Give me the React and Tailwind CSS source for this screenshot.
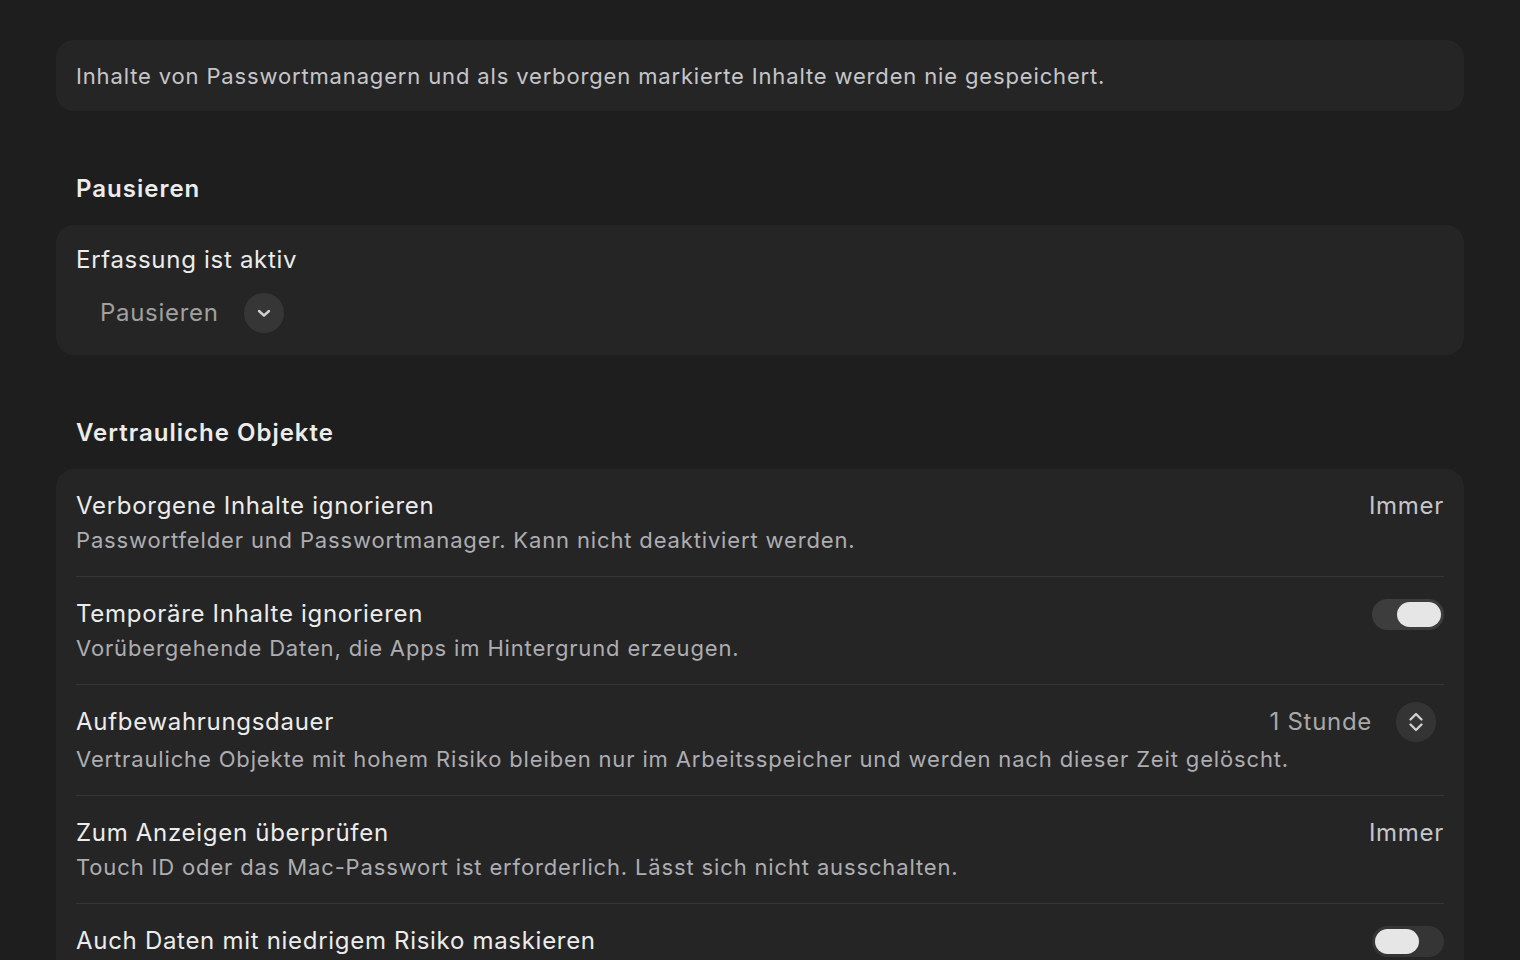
import { useState } from "react"

const font = { fontFamily: "Inter, 'Noto Sans', sans-serif" }

const Toggle = ({ on, onClick }) => (
  <button
    onClick={onClick}
    className={`w-[72px] h-[31px] rounded-full p-[3px] flex ${on ? "justify-end bg-[#3d3d3d]" : "justify-start bg-[#353535]"}`}
  >
    <span className="w-[44px] h-[25px] rounded-full bg-[#e6e6e6]" />
  </button>
)

const Row = ({ title, desc, right, last, tall }) => (
  <div className={last ? "" : "border-b border-[#363636]"}>
    <div className={tall ? "pt-[17px] pb-[21px]" : "pt-[22px] pb-[21px]"}>
      <div className={`flex items-center justify-between ${tall ? "h-[40px]" : "h-[30px]"}`}>
        <span className="text-[24px] leading-[30px] tracking-[0.7px] text-[#ececec]">{title}</span>
        {right}
      </div>
      {desc && (
        <p className={`text-[22px] leading-[30px] tracking-[0.85px] text-[#adadb2] ${tall ? "mt-[2px]" : "mt-[4px]"}`}>{desc}</p>
      )}
    </div>
  </div>
)

const App = () => {
  const [temp, setTemp] = useState(true)
  const [low, setLow] = useState(false)

  return (
    <div className="min-h-screen bg-[#1e1e1e] px-[56px] pt-[40px] pb-10" style={font}>
      <div className="bg-[#252525] rounded-[18px] h-[71px] px-[20px] pt-[2px] flex items-center">
        <p className="text-[22px] tracking-[0.85px] text-[#c6c6ca]">
          Inhalte von Passwortmanagern und als verborgen markierte Inhalte werden nie gespeichert.
        </p>
      </div>

      <h2 className="mt-[63px] mb-[21px] px-[20px] text-[24px] leading-[30px] tracking-[1px] font-semibold text-[#ececec]">Pausieren</h2>

      <div className="bg-[#252525] rounded-[18px] px-[20px] pt-[20px] pb-[22px]">
        <p className="text-[24px] leading-[30px] tracking-[0.7px] text-[#ececec]">Erfassung ist aktiv</p>
        <div className="mt-[18px] h-[40px] flex items-center pl-[24px] gap-[25px]">
          <span className="text-[24px] tracking-[0.7px] text-[#a0a0a0]">Pausieren</span>
          <span className="w-[40px] h-[40px] rounded-full bg-[#363636] flex items-center justify-center">
            <svg width="16" height="16" viewBox="0 0 16 16" fill="none" stroke="#cfcfcf" strokeWidth="2.4" strokeLinecap="round" strokeLinejoin="round">
              <path d="M3 6l5 4.5L13 6" />
            </svg>
          </span>
        </div>
      </div>

      <h2 className="mt-[63px] mb-[21px] px-[20px] text-[24px] leading-[30px] tracking-[1px] font-semibold text-[#ececec]">Vertrauliche Objekte</h2>

      <div className="bg-[#252525] rounded-[18px] px-[20px]">
        <Row
          title="Verborgene Inhalte ignorieren"
          desc="Passwortfelder und Passwortmanager. Kann nicht deaktiviert werden."
          right={<span className="text-[24px] tracking-[0.7px] text-[#c6c6ca]">Immer</span>}
        />
        <Row
          title="Temporäre Inhalte ignorieren"
          desc="Vorübergehende Daten, die Apps im Hintergrund erzeugen."
          right={<Toggle on={temp} onClick={() => setTemp(!temp)} />}
        />
        <Row
          tall
          title="Aufbewahrungsdauer"
          desc="Vertrauliche Objekte mit hohem Risiko bleiben nur im Arbeitsspeicher und werden nach dieser Zeit gelöscht."
          right={
            <div className="flex items-center gap-[24px] mr-[8px]">
              <span className="text-[24px] tracking-[0.7px] text-[#a8a8a8]">1 Stunde</span>
              <span className="w-[40px] h-[40px] rounded-full bg-[#343434] flex items-center justify-center">
                <svg width="18" height="24" viewBox="0 0 18 24" fill="none" stroke="#cfcfcf" strokeWidth="2.4" strokeLinecap="round" strokeLinejoin="round">
                  <path d="M3.5 9.5 9 4l5.5 5.5" />
                  <path d="M3.5 14.5 9 20l5.5-5.5" />
                </svg>
              </span>
            </div>
          }
        />
        <Row
          title="Zum Anzeigen überprüfen"
          desc="Touch ID oder das Mac-Passwort ist erforderlich. Lässt sich nicht ausschalten."
          right={<span className="text-[24px] tracking-[0.7px] text-[#c6c6ca]">Immer</span>}
        />
        <Row
          last
          title="Auch Daten mit niedrigem Risiko maskieren"
          right={<Toggle on={low} onClick={() => setLow(!low)} />}
        />
      </div>
    </div>
  )
}

export default App
